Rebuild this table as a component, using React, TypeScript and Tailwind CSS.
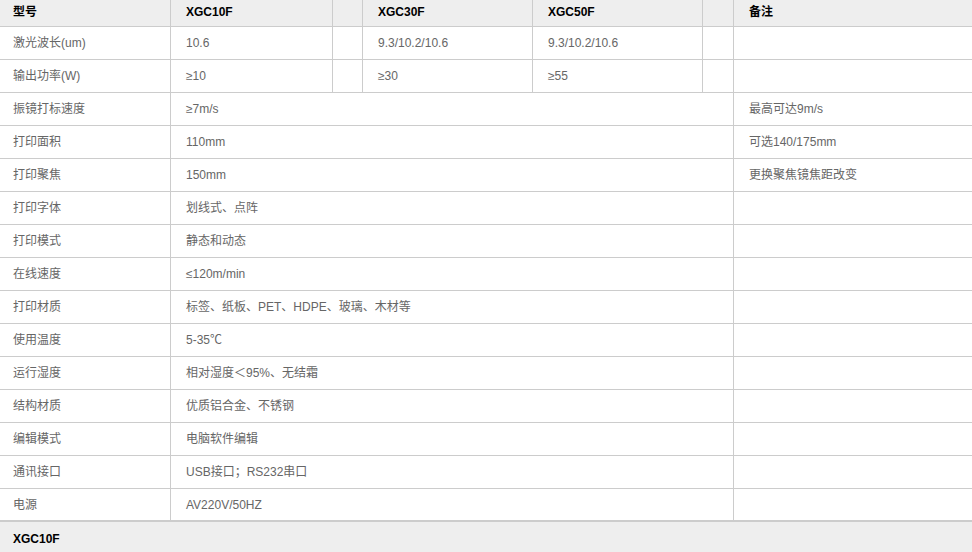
const font = { fontFamily: '"Liberation Sans", Arial, "Noto Sans CJK SC", sans-serif' };

const specRows: [string, string, string][] = [
  ['振镜打标速度', '≥7m/s', '最高可达9m/s'],
  ['打印面积', '110mm', '可选140/175mm'],
  ['打印聚焦', '150mm', '更换聚焦镜焦距改变'],
  ['打印字体', '划线式、点阵', ''],
  ['打印模式', '静态和动态', ''],
  ['在线速度', '≤120m/min', ''],
  ['打印材质', '标签、纸板、PET、HDPE、玻璃、木材等', ''],
  ['使用温度', '5-35℃', ''],
  ['运行湿度', '相对湿度＜95%、无结霜', ''],
  ['结构材质', '优质铝合金、不锈钢', ''],
  ['编辑模式', '电脑软件编辑', ''],
  ['通讯接口', 'USB接口；RS232串口', ''],
  ['电源', 'AV220V/50HZ', ''],
];

export default function App() {
  const th = 'h-[27px] border-b border-r border-[#cccccc] bg-[#eeeeee] pb-[3px] text-left align-middle font-bold text-black';
  const td = 'h-[33px] border-b border-r border-[#cccccc] align-middle text-[#666666]';
  const last = 'border-r-0';

  return (
    <div className="w-[972px] bg-white text-[12px] leading-[14px]" style={font}>
      <table className="w-[972px] table-fixed border-separate border-spacing-0">
        <colgroup>
          <col className="w-[171px]" />
          <col className="w-[162px]" />
          <col className="w-[30px]" />
          <col className="w-[170px]" />
          <col className="w-[170px]" />
          <col className="w-[31px]" />
          <col className="w-[238px]" />
        </colgroup>
        <thead>
          <tr>
            <th className={`${th} pl-[13px]`}>型号</th>
            <th className={`${th} pl-[15px]`}>XGC10F</th>
            <th className={th}></th>
            <th className={`${th} pl-[15px]`}>XGC30F</th>
            <th className={`${th} pl-[15px]`}>XGC50F</th>
            <th className={th}></th>
            <th className={`${th} ${last} pl-[15px]`}>备注</th>
          </tr>
        </thead>
        <tbody>
          <tr>
            <td className={`${td} pl-[13px]`}>激光波长(um)</td>
            <td className={`${td} pl-[15px]`}>10.6</td>
            <td className={td}></td>
            <td className={`${td} pl-[15px]`}>9.3/10.2/10.6</td>
            <td className={`${td} pl-[15px]`}>9.3/10.2/10.6</td>
            <td className={td}></td>
            <td className={`${td} ${last}`}></td>
          </tr>
          <tr>
            <td className={`${td} pl-[13px]`}>输出功率(W)</td>
            <td className={`${td} pl-[15px]`}>≥10</td>
            <td className={td}></td>
            <td className={`${td} pl-[15px]`}>≥30</td>
            <td className={`${td} pl-[15px]`}>≥55</td>
            <td className={td}></td>
            <td className={`${td} ${last}`}></td>
          </tr>
          {specRows.map(([name, value, note], i) => {
            const isLast = i === specRows.length - 1;
            const cell = isLast ? `${td} border-b-2` : td;
            return (
              <tr key={name}>
                <td className={`${cell} pl-[13px]`}>{name}</td>
                <td colSpan={5} className={`${cell} pl-[15px]`}>{value}</td>
                <td className={`${cell} ${last} pl-[15px]`}>{note}</td>
              </tr>
            );
          })}
          <tr>
            <td colSpan={7} className="h-[33px] bg-[#eeeeee] pl-[13px] align-middle font-bold text-black">
              XGC10F
            </td>
          </tr>
        </tbody>
      </table>
    </div>
  );
}
